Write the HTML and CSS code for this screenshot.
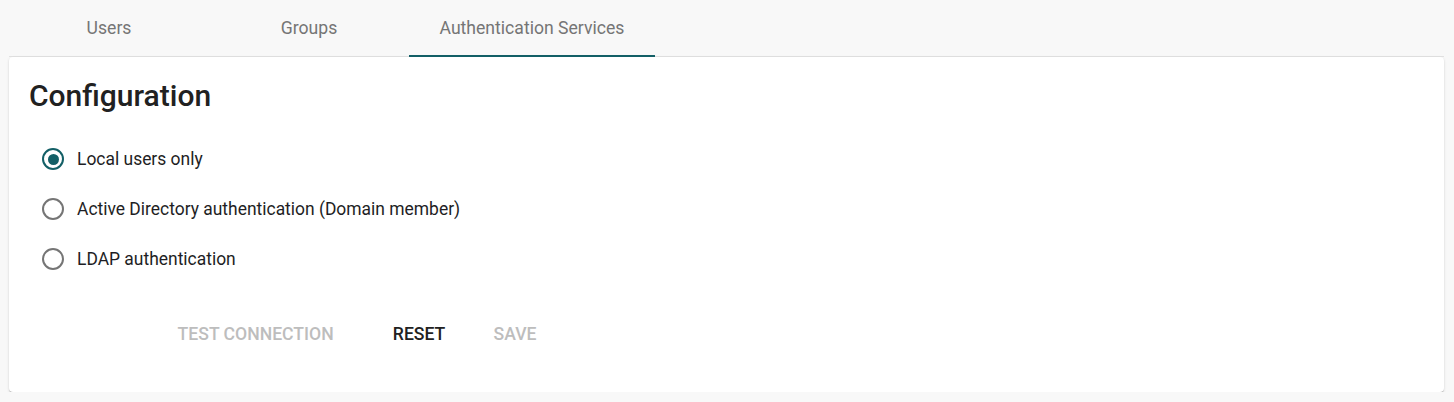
FILE: index.html
```html
<!DOCTYPE html>
<html>
<head>
<meta charset="utf-8">
<link rel="stylesheet" href="styles.css">
</head>
<body>
<div class="page">
  <nav class="tabs">
    <div class="tab">Users</div>
    <div class="tab">Groups</div>
    <div class="tab active">Authentication Services</div>
  </nav>
  <section class="card">
    <h1 class="title">Configuration</h1>
    <div class="radios">
      <label class="radio checked"><span class="circle"><span class="dot"></span></span><span class="label">Local users only</span></label>
      <label class="radio"><span class="circle"></span><span class="label">Active Directory authentication (Domain member)</span></label>
      <label class="radio"><span class="circle"></span><span class="label">LDAP authentication</span></label>
    </div>
    <div class="actions">
      <button class="btn disabled btn-test">TEST CONNECTION</button>
      <button class="btn btn-reset">RESET</button>
      <button class="btn disabled btn-save">SAVE</button>
    </div>
  </section>
</div>
</body>
</html>
```

FILE: styles.css
```css
html, body {
  margin: 0;
  padding: 0;
  background: #f8f8f8;
  font-family: Roboto, "Liberation Sans", sans-serif;
  color: #212121;
}
.page {
  padding: 0 10px 0 9px;
}
.tabs {
  display: flex;
  height: 56px;
  border-bottom: 1px solid #e2e2e2;
}
.tab {
  min-width: 200px;
  box-sizing: border-box;
  padding: 0 30.5px;
  display: flex;
  align-items: center;
  justify-content: center;
  font-size: 17.6px;
  color: #757575;
  border-bottom: 2px solid transparent;
  margin-bottom: -1px;
}
.tab.active {
  border-bottom-color: #135f66;
}
.card {
  background: #fff;
  border-radius: 4px;
  box-shadow: 0 2px 1px -1px rgba(0,0,0,.2), 0 1px 1px 0 rgba(0,0,0,.14), 0 1px 3px 0 rgba(0,0,0,.12);
  padding: 21px 20px 40px 20px;
}
.title {
  margin: 0 0 20px 0;
  font-size: 30px;
  line-height: 36px;
  font-weight: 500;
  color: #212121;
}
.radios {
  display: flex;
  flex-direction: column;
}
.radio {
  display: flex;
  align-items: center;
  height: 50px;
  font-size: 17.45px;
  color: #1e1e24;
}
.circle {
  width: 22px;
  height: 22px;
  box-sizing: border-box;
  border: 2px solid #757575;
  border-radius: 50%;
  margin: 0 13px 0 13px;
  display: flex;
  align-items: center;
  justify-content: center;
}
.radio.checked .circle {
  border-color: #135f66;
}
.dot {
  width: 11px;
  height: 11px;
  border-radius: 50%;
  background: #135f66;
}
.actions {
  display: flex;
  margin-top: 32px;
  margin-left: 131px;
}
.btn {
  height: 36px;
  min-width: 64px;
  padding: 0 17.6px;
  border: none;
  background: transparent;
  font-family: Roboto, "Liberation Sans", sans-serif;
  font-size: 17.6px;
  font-weight: 500;
  color: #212121;
}
.btn.disabled {
  color: #bdbdbd;
}
.btn-reset {
  margin-left: 24px;
}
.btn-save {
  margin-left: 13px;
}
```
